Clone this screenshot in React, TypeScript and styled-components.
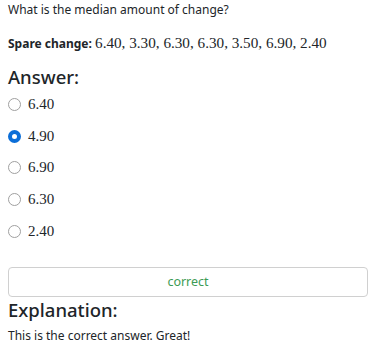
import React from "react";
import styled, { createGlobalStyle } from "styled-components";

const Global = createGlobalStyle`
  html, body { margin: 0; padding: 0; background: #fff; }
  body { font-family: "Noto Sans", "Open Sans", sans-serif; color: #212529; }
`;

const Page = styled.div`
  padding: 0 8px;
  width: 360px;
`;

const Question = styled.p`
  margin: 0;
  font-size: 12px;
  line-height: 20px;
`;

const Data = styled.p`
  margin: 13px 0 0;
  font-size: 12px;
  line-height: 20px;
`;

const Label = styled.b`
  font-weight: 700;
`;

const Values = styled.span`
  font-family: "Liberation Serif", "Times New Roman", serif;
  font-size: 15.2px;
`;

const Heading = styled.h3<{ $top: number }>`
  margin: ${(p) => p.$top}px 0 0;
  font-size: 18.5px;
  font-weight: 500;
  line-height: 24px;
`;

const Options = styled.div`
  display: flex;
  flex-direction: column;
  margin-top: -0.5px;
`;

const Option = styled.label`
  display: flex;
  align-items: center;
  height: 31.75px;
  gap: 7px;
`;

const Radio = styled.input`
  appearance: none;
  margin: 0;
  width: 13px;
  height: 13px;
  border-radius: 50%;
  border: 1px solid #a0a0a0;
  background: #fff;
  box-sizing: border-box;
  &:checked {
    border: 4px solid #0b6ed8;
    background: #fff;
  }
`;

const OptionText = styled.span`
  font-family: "Liberation Serif", "Times New Roman", serif;
  font-size: 15px;
`;

const ResultBox = styled.div`
  margin-top: 19.5px;
  height: 30px;
  box-sizing: border-box;
  border: 1px solid #d0d0d0;
  border-radius: 4px;
  display: flex;
  align-items: center;
  justify-content: center;
  color: #3d9b55;
  font-size: 12.5px;
`;

const Text = styled.p`
  margin: 4px 0 0;
  font-size: 12px;
  line-height: 20px;
`;

const options = ["6.40", "4.90", "6.90", "6.30", "2.40"];

export default function App() {
  return (
    <>
      <Global />
      <Page>
        <Question>What is the median amount of change?</Question>
        <Data>
          <Label>Spare change:</Label>{" "}
          <Values>6.40, 3.30, 6.30, 6.30, 3.50, 6.90, 2.40</Values>
        </Data>
        <Heading $top={11}>Answer:</Heading>
        <Options>
          {options.map((o, i) => (
            <Option key={o}>
              <Radio type="radio" name="ans" defaultChecked={i === 1} />
              <OptionText>{o}</OptionText>
            </Option>
          ))}
        </Options>
        <ResultBox>correct</ResultBox>
        <Heading $top={1}>Explanation:</Heading>
        <Text>This is the correct answer. Great!</Text>
      </Page>
    </>
  );
}
